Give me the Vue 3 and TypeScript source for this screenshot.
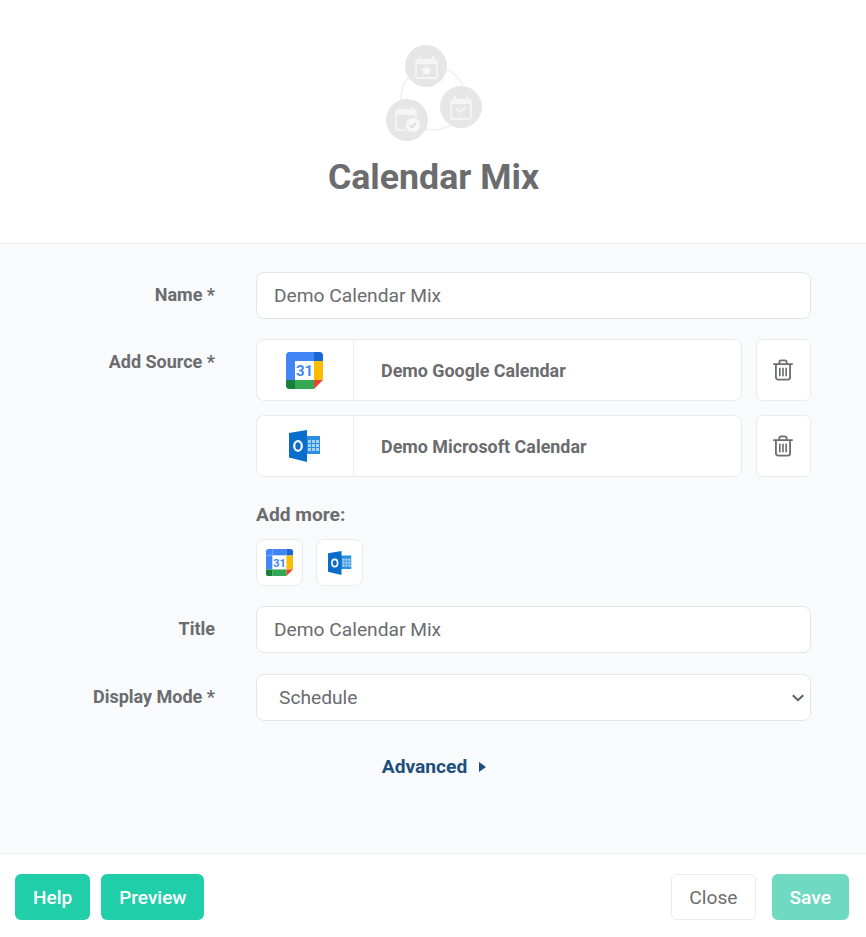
<script setup lang="ts">
const sources = [
  { name: "Demo Google Calendar", kind: "google" },
  { name: "Demo Microsoft Calendar", kind: "outlook" },
]
const more = ["google", "outlook"]
</script>

<template>
  <div class="page">
    <svg width="0" height="0" class="defs">
      <symbol id="gcal" viewBox="0 0 37 37">
        <path d="M0 9V3.500A3.500 3.500 0 0 1 3.500 0H9v9z" fill="#4285f4" />
        <rect x="9" y="0" width="19" height="9" fill="#4285f4" />
        <path d="M28 0h5.500A3.500 3.500 0 0 1 37 3.500V9h-9z" fill="#1967d2" />
        <rect x="0" y="9" width="9" height="19" fill="#4285f4" />
        <rect x="9" y="9" width="19" height="19" fill="#fff" />
        <rect x="28" y="9" width="9" height="19" fill="#fbbc04" />
        <path d="M0 28h9v9H3.500A3.500 3.500 0 0 1 0 33.500z" fill="#188038" />
        <rect x="9" y="28" width="19" height="9" fill="#34a853" />
        <path d="M28 28h9l-9 9z" fill="#ea4335" />
      </symbol>
      <symbol id="outlook" viewBox="0 0 32 32">
        <rect x="17" y="6" width="14" height="18" fill="#2a8fe0" />
        <g fill="#a9d2f2">
          <rect x="19" y="10" width="3" height="3" />
          <rect x="23" y="10" width="3" height="3" />
          <rect x="27" y="10" width="3" height="3" />
          <rect x="19" y="14" width="3" height="3" />
          <rect x="23" y="14" width="3" height="3" />
          <rect x="27" y="14" width="3" height="3" />
          <rect x="19" y="18" width="3" height="3" />
          <rect x="23" y="18" width="3" height="3" />
          <rect x="27" y="18" width="3" height="3" />
        </g>
        <path d="M0 3 18 0v32L0 27.500z" fill="#0a6ccb" />
        <ellipse cx="9" cy="16" rx="3.800" ry="4.800" fill="none" stroke="#fff" stroke-width="2.200" />
      </symbol>
    </svg>

    <header class="head">
      <svg class="logo" width="100" height="100" viewBox="0 0 100 100">
        <circle cx="50" cy="56" r="32" fill="none" stroke="#f0f0f0" stroke-width="1.500" />
        <g transform="translate(43 24)">
          <circle r="21" fill="#e6e6e6" />
          <rect x="-10" y="-6" width="21" height="18" rx="1.500" fill="none" stroke="#f4f4f4" stroke-width="1.800" />
          <path d="M-10-7h21v5h-21z" fill="#f4f4f4" />
          <path d="M-6-10v4M7-10v4" stroke="#f4f4f4" stroke-width="1.800" />
          <path d="m.5-1 1.700 3.400 3.800.5-2.800 2.600.7 3.800-3.400-1.800-3.400 1.800.7-3.800-2.800-2.600 3.800-.5z" fill="#f7f7f7" />
        </g>
        <g transform="translate(78 65)">
          <circle r="21" fill="#e6e6e6" />
          <rect x="-10" y="-7" width="20" height="19" rx="1.500" fill="none" stroke="#f4f4f4" stroke-width="1.800" />
          <path d="M-10-7h20v4h-20z" fill="#f4f4f4" />
          <path d="M-6-11v4M6-11v4" stroke="#f4f4f4" stroke-width="1.800" />
          <path d="m-5 1.500 4 3.500 6-5.500" fill="none" stroke="#f4f4f4" stroke-width="1.800" />
        </g>
        <g transform="translate(24 78)">
          <circle r="21" fill="#e6e6e6" />
          <path d="M-1 10h-8a2 2 0 0 1-2-2V-8a2 2 0 0 1 2-2H7a2 2 0 0 1 2 2v5" fill="none" stroke="#f4f4f4" stroke-width="1.800" />
          <path d="M-11-9H9v4h-20z" fill="#f4f4f4" />
          <path d="M-7-13v4M5-13v4" stroke="#f4f4f4" stroke-width="1.800" />
          <circle cx="6" cy="5" r="7" fill="#f7f7f7" />
          <path d="m2.500 5 2.500 2.500 4-4.500" fill="none" stroke="#dcdcdc" stroke-width="1.800" />
        </g>
      </svg>
      <h1 class="title">Calendar Mix</h1>
    </header>

    <main class="body">
      <div class="row">
        <label class="label">Name *</label>
        <div class="control">
          <input class="field" value="Demo Calendar Mix" />
        </div>
      </div>

      <div class="row">
        <label class="label">Add Source *</label>
        <div class="control">
          <div class="sources">
            <div v-for="s in sources" :key="s.name" class="source">
              <div class="source-card">
                <div class="source-icon">
                  <svg v-if="s.kind === 'google'" class="gcal-big" width="37" height="37" viewBox="0 0 37 37">
                    <use href="#gcal" width="37" height="37" />
                    <text x="18.500" y="24" text-anchor="middle" class="gcal-num">31</text>
                  </svg>
                  <svg v-else width="32" height="32"><use href="#outlook" /></svg>
                </div>
                <div class="source-name">{{ s.name }}</div>
              </div>
              <button class="trash">
                <svg width="20" height="22" viewBox="0 0 22 24" fill="none" stroke="#6d6e70" stroke-width="2">
                  <path d="M1 5.500h20" stroke-linecap="round" />
                  <path d="M7 5.500V3.500a2 2 0 0 1 2-2h4a2 2 0 0 1 2 2v2" />
                  <path d="M3.200 5.500V20a2.500 2.500 0 0 0 2.500 2.500h10.600a2.500 2.500 0 0 0 2.500-2.500V5.500" />
                  <path d="M7.500 9.500V19M11 9.500V19M14.500 9.500V19" stroke-width="1.800" />
                </svg>
              </button>
            </div>
          </div>
          <div class="more-label">Add more:</div>
          <div class="more">
            <button v-for="m in more" :key="m" class="more-btn">
              <svg v-if="m === 'google'" width="27" height="27" viewBox="0 0 37 37">
                <use href="#gcal" width="37" height="37" />
                <text x="18.500" y="24" text-anchor="middle" class="gcal-num">31</text>
              </svg>
              <svg v-else width="24" height="24"><use href="#outlook" /></svg>
            </button>
          </div>
        </div>
      </div>

      <div class="row">
        <label class="label">Title</label>
        <div class="control">
          <input class="field" value="Demo Calendar Mix" />
        </div>
      </div>

      <div class="row row-mode">
        <label class="label">Display Mode *</label>
        <div class="control select-wrap">
          <select class="field select">
            <option>Schedule</option>
          </select>
          <svg class="chev" width="12" height="8" viewBox="0 0 12 8" fill="none" stroke="#5f6062" stroke-width="2">
            <path d="m.8 1.200 5.200 5 5.200-5" />
          </svg>
        </div>
      </div>

      <div class="advanced">
        <span>Advanced</span>
        <svg width="7" height="10" viewBox="0 0 7 10"><path d="M0 0l7 5-7 5z" fill="#1d4f7c" /></svg>
      </div>
    </main>

    <footer class="foot">
      <div class="foot-group">
        <button class="btn btn-green">Help</button>
        <button class="btn btn-green">Preview</button>
      </div>
      <div class="foot-group foot-right">
        <button class="btn btn-close">Close</button>
        <button class="btn btn-save">Save</button>
      </div>
    </footer>
  </div>
</template>

<style>
html, body {
  margin: 0;
  background: #fff;
}
</style>

<style scoped>
.page {
  width: 866px;
  height: 937px;
  display: flex;
  flex-direction: column;
  font-family: Roboto, "Liberation Sans", sans-serif;
  color: #6b6c6e;
}

.defs {
  position: absolute;
}

.gcal-num {
  font-family: Roboto, sans-serif;
  font-size: 15px;
  font-weight: 700;
  fill: #4285f4;
}

.head {
  height: 244px;
  display: flex;
  flex-direction: column;
  align-items: center;
  box-sizing: border-box;
  padding-top: 42px;
  border-bottom: 1px solid #e9ebee;
}

.logo {
  display: block;
  width: 100px;
  height: 100px;
  overflow: visible;
  filter: blur(0.4px);
}

.title {
  margin: 13px 0 0 1px;
  font-size: 35.7px;
  line-height: 44px;
  font-weight: 700;
  color: #6b6c6e;
}

.body {
  flex: 1;
  background: #f8fafc;
  padding: 28px 55px 0 0;
  display: flex;
  flex-direction: column;
  gap: 20px;
}

.row {
  display: grid;
  grid-template-columns: 215px 555px;
  column-gap: 41px;
  align-items: start;
}

.row-mode {
  margin-top: 1px;
}

.label {
  text-align: right;
  font-size: 18px;
  font-weight: 700;
  line-height: 46px;
  color: #6b6c6e;
}

.field {
  display: block;
  box-sizing: border-box;
  width: 100%;
  height: 47px;
  padding: 0 17px;
  background: #fff;
  border: 1px solid #e3e5e8;
  border-radius: 8px;
  font-family: inherit;
  font-size: 19.2px;
  color: #6b6c6e;
  outline: none;
}

.select-wrap {
  position: relative;
}

.select {
  appearance: none;
  padding-left: 22px;
}

.chev {
  position: absolute;
  right: 7px;
  top: 20px;
}

.sources {
  display: flex;
  flex-direction: column;
  gap: 14px;
}

.source {
  display: flex;
  gap: 14px;
}

.source-card {
  flex: 1;
  height: 62px;
  box-sizing: border-box;
  display: flex;
  align-items: center;
  background: #fff;
  border: 1px solid #e9ebee;
  border-radius: 8px;
}

.source-icon {
  width: 96px;
  height: 60px;
  flex: none;
  display: flex;
  align-items: center;
  justify-content: center;
  border-right: 1px solid #e9ebee;
}

.source-icon svg,
.more-btn svg,
.trash svg {
  display: block;
}

.gcal-big {
  margin-left: -1px;
}

.source-name {
  padding-left: 27px;
  font-size: 17.9px;
  font-weight: 700;
  color: #6b6c6e;
}

.trash {
  width: 55px;
  height: 62px;
  padding: 0 2px 0 0;
  display: flex;
  align-items: center;
  justify-content: center;
  background: #fff;
  border: 1px solid #e9ebee;
  border-radius: 6px;
}

.more-label {
  margin-top: 26px;
  font-size: 19.2px;
  font-weight: 700;
  line-height: 24px;
  color: #6b6c6e;
}

.more {
  display: flex;
  gap: 13px;
  margin-top: 12px;
}

.more-btn {
  width: 47px;
  height: 47px;
  padding: 0;
  display: flex;
  align-items: center;
  justify-content: center;
  background: #fff;
  border: 1px solid #e9ebee;
  border-radius: 8px;
}

.advanced {
  margin-top: 14px;
  padding-left: 57px;
  display: flex;
  justify-content: center;
  align-items: center;
  gap: 12px;
  font-size: 19.2px;
  font-weight: 700;
  line-height: 24px;
  color: #1d4f7c;
}

.foot {
  height: 84px;
  box-sizing: border-box;
  display: flex;
  justify-content: space-between;
  align-items: flex-start;
  padding: 20px 17px 0 15px;
  border-top: 1px solid #e9ebee;
  background: #fff;
}

.foot-group {
  display: flex;
  gap: 11px;
}

.foot-right {
  gap: 16px;
}

.btn {
  height: 46px;
  padding: 0 17px;
  border: 1px solid transparent;
  border-radius: 6px;
  font-family: inherit;
  font-size: 19.2px;
  font-weight: 500;
  color: #fff;
}

.btn-green {
  background: #20cfa9;
  font-size: 19px;
}

.btn-close {
  background: #fff;
  border-color: #e9ebee;
  color: #6d6e70;
  font-weight: 400;
}

.btn-save {
  background: #6fd9c1;
}
</style>
